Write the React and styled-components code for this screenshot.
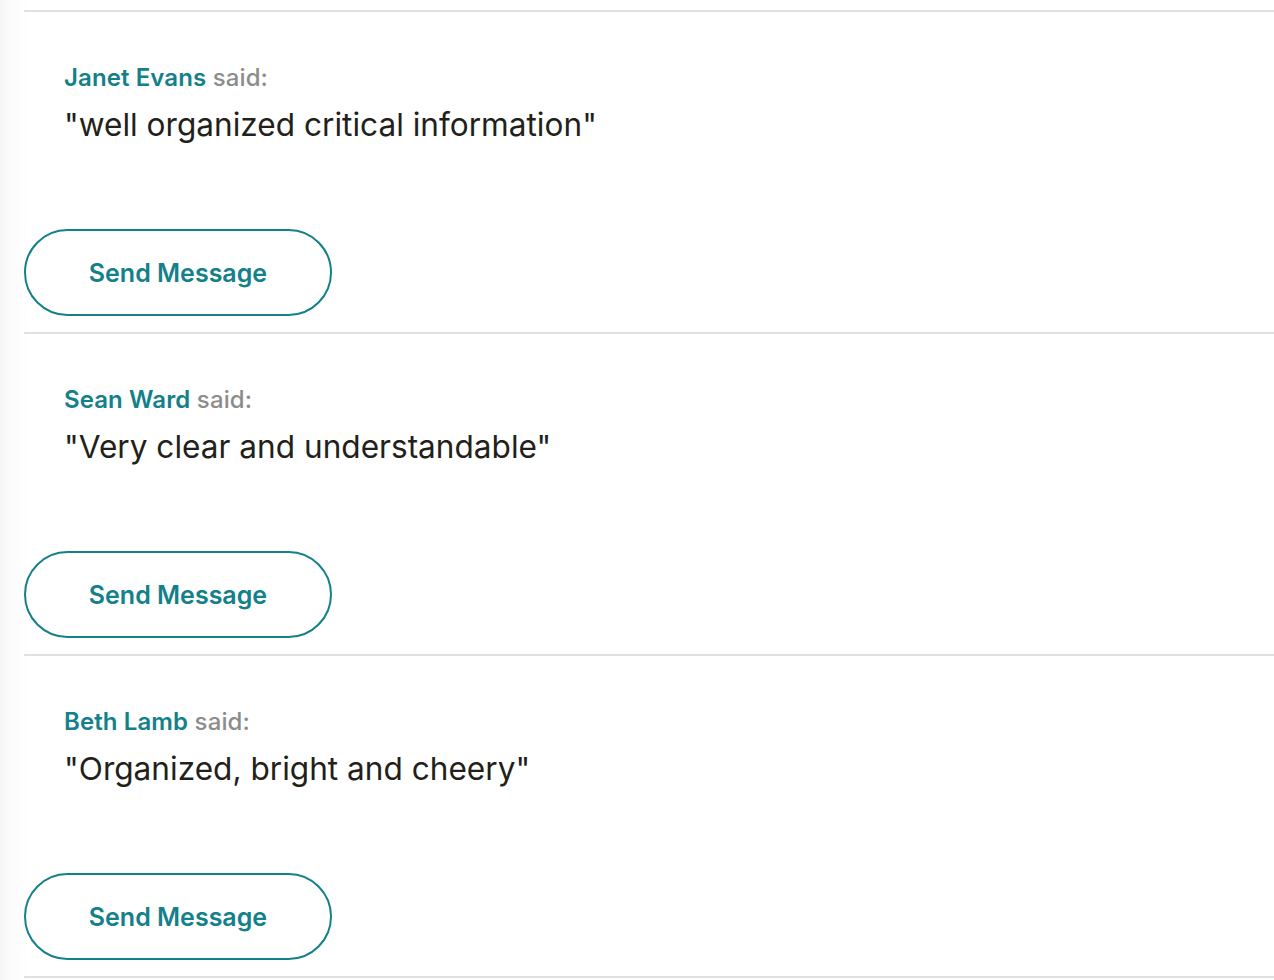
import React from "react";
import styled, { createGlobalStyle } from "styled-components";

const Global = createGlobalStyle`
  html, body { margin: 0; padding: 0; background: #fff; }
  body { font-family: Inter, "Liberation Sans", sans-serif; }
`;

const Page = styled.div`
  min-height: 980px;
  padding: 10px 0 0 24px;
  box-sizing: border-box;
  background: linear-gradient(to right, #f6f6f6 0px, #fbfbfb 10px, #ffffff 30px);
`;

const List = styled.div`
  display: flex;
  flex-direction: column;
`;

const Review = styled.section`
  border-top: 2px solid #e0e0e0;
  padding: 51px 0 16px;
  display: flex;
  flex-direction: column;
  align-items: flex-start;
  &:last-child { border-bottom: 2px solid #e0e0e0; }
`;

const Byline = styled.div`
  padding-left: 40px;
  font-size: 24px;
  line-height: 30px;
  color: #8c8c8c;
  font-weight: 500;
  letter-spacing: 0.1px;
`;

const Name = styled.span`
  color: #13808a;
  font-weight: 600;
`;

const Quote = styled.p`
  margin: 12px 0 0 40px;
  font-size: 31.6px;
  line-height: 40px;
  color: #231f1b;
`;

const Button = styled.button`
  margin-top: 84px;
  width: 308px;
  height: 87px;
  border: 2px solid #13808a;
  border-radius: 44px;
  background: #fff;
  color: #13808a;
  font-family: inherit;
  font-size: 25px;
  font-weight: 600;
  cursor: pointer;
`;

const reviews = [
  { name: "Janet Evans", text: '"well organized critical information"' },
  { name: "Sean Ward", text: '"Very clear and understandable"' },
  { name: "Beth Lamb", text: '"Organized, bright and cheery"' },
];

export default function App() {
  return (
    <>
      <Global />
      <Page>
        <List>
          {reviews.map((r) => (
            <Review key={r.name}>
              <Byline>
                <Name>{r.name}</Name> said:
              </Byline>
              <Quote>{r.text}</Quote>
              <Button>Send Message</Button>
            </Review>
          ))}
        </List>
      </Page>
    </>
  );
}
